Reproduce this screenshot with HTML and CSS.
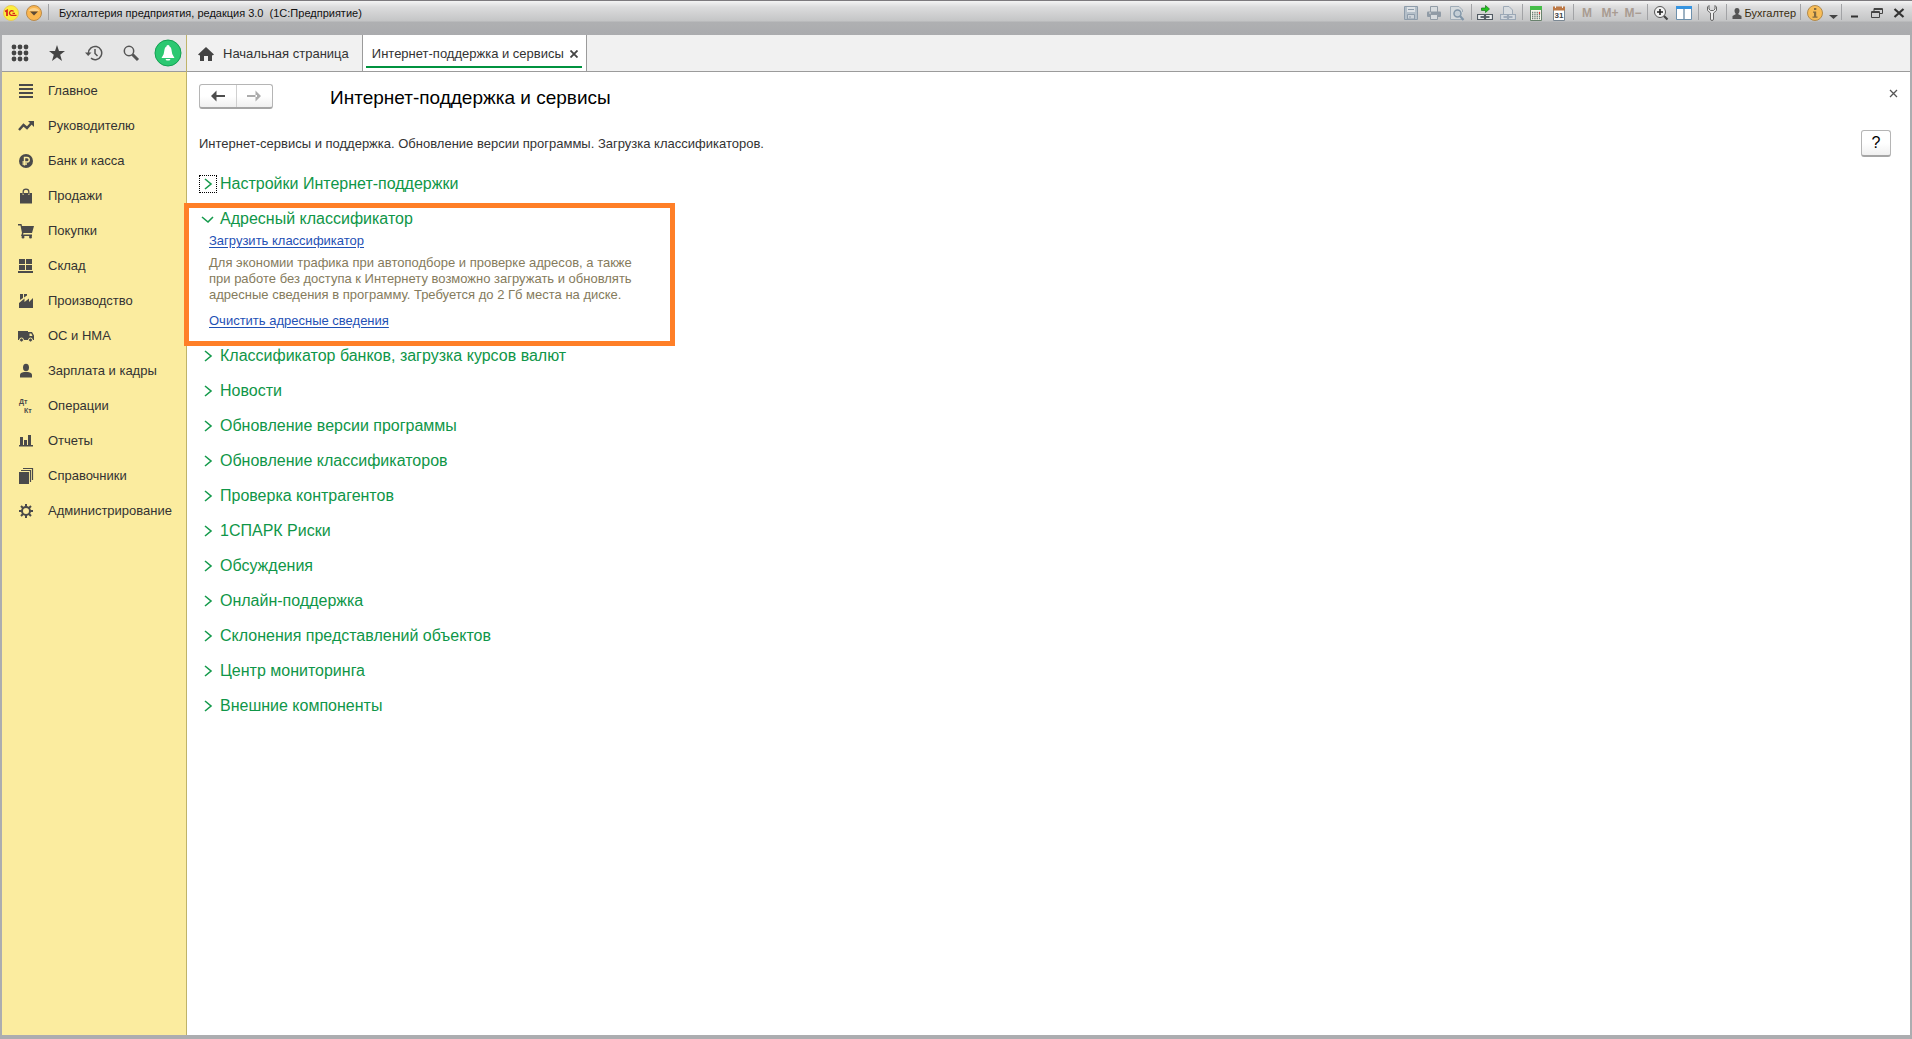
FILE: index.html
```html
<!DOCTYPE html>
<html lang="ru">
<head>
<meta charset="utf-8">
<title>Бухгалтерия предприятия, редакция 3.0</title>
<link rel="stylesheet" href="styles.css">
</head>
<body>
<div class="window">
  <header class="titlebar">
    <button class="tb-btn logo" aria-label="1С"><svg width="16" height="16" viewBox="0 0 16 16"><circle cx="8" cy="8" r="7.500" fill="#fdee3c" stroke="#e8c95a"/><path d="M2 6.500L4 5.500V11" fill="none" stroke="#d8261c" stroke-width="1.800"/><path d="M10.500 6.500A2.300 2.300 0 1 0 8.500 10.300H13.500M9.500 8.300H12" fill="none" stroke="#d8261c" stroke-width="1.300"/></svg></button>
    <button class="tb-btn main-menu" aria-label="Главное меню"><svg width="16" height="16" viewBox="0 0 16 16"><circle cx="8" cy="8" r="7.500" fill="#fbb64f" stroke="#b98a4c"/><path d="M2.500 6A6 5 0 0 1 13.500 6Z" fill="#fdd28b"/><path d="M4 6.500H12L8 10.500Z" fill="#5d4a36"/></svg></button>
    <span class="sep"></span>
    <span class="app-title">Бухгалтерия предприятия, редакция 3.0 &nbsp;(1С:Предприятие)</span>
    <button class="tb-btn" aria-label="Сохранить"><svg width="16" height="16" viewBox="0 0 16 16"><path d="M1.500 1.500H14.500V14.500H1.500Z" fill="#b4bfc9" stroke="#8e9caa"/><path d="M4 2H12V7H4Z" fill="#dde1e5"/><path d="M4.500 9.500H11.500V14H4.500Z" fill="#cdd3d9" stroke="#8e9caa"/><path d="M5 4.500H11M6 12H8" stroke="#8e9caa"/></svg></button>
    <button class="tb-btn" aria-label="Печать"><svg width="16" height="16" viewBox="0 0 16 16"><path d="M4.500 7V1.500H11.500V7" fill="#d8dcdf" stroke="#929ca6"/><rect x="1" y="6.500" width="14" height="5.500" rx="1" fill="#909ba6"/><path d="M4.500 9.500H11.500V14.500H4.500Z" fill="#d8dcdf" stroke="#929ca6"/><path d="M3 8H5" stroke="#ddd"/></svg></button>
    <button class="tb-btn" aria-label="Просмотр"><svg width="16" height="16" viewBox="0 0 16 16"><path d="M13 14.500H1.500V1.500H10L13.500 5V7" fill="#d5dadd" stroke="#a0acb7"/><circle cx="8.500" cy="8.500" r="3.500" fill="#c3ced6" stroke="#8296a8" stroke-width="1.500"/><path d="M11 11L14.500 15" stroke="#8296a8" stroke-width="2.200"/></svg></button>
    <span class="sep"></span>
    <button class="tb-btn" aria-label="Перейти по ссылке"><svg width="16" height="16" viewBox="0 0 16 16"><path d="M4.500 3H8.500V.500L12.500 4L8.500 7.500V5.500H4.500Z" fill="#22c51e" stroke="#17751a" stroke-width=".7"/><path d="M.500 9.500H7.500V14.500H.500ZM8.500 9.500H15.500V14.500H8.500Z" fill="#eceeef" stroke="#515a62" stroke-width="1.200"/><path d="M3.500 12H12.500" stroke="#515a62" stroke-width="1.800"/></svg></button>
    <button class="tb-btn" aria-label="Получить ссылку"><svg width="16" height="16" viewBox="0 0 16 16"><path d="M3.500 9V1.500H9L12.500 5V9" fill="#d8dce0" stroke="#9eaab7"/><path d="M.500 9.500H7.500V14.500H.500ZM8.500 9.500H15.500V14.500H8.500Z" fill="#d5dadf" stroke="#9ba8b6" stroke-width="1.200"/><path d="M3.500 12H12.500" stroke="#9ba8b6" stroke-width="1.800"/></svg></button>
    <span class="sep"></span>
    <button class="tb-btn" aria-label="Калькулятор"><svg width="16" height="16" viewBox="0 0 16 16"><path d="M2.500 1.500H13.500V15.500H2.500Z" fill="#f6f6ec" stroke="#69826d"/><path d="M2 1H14V5H2Z" fill="#45bd48"/><path d="M4 7.500H12M4 9.500H12M4 11.500H12M4 13.500H12" stroke="#708078" stroke-width="1.300" stroke-dasharray="1.300 1"/><path d="M11.500 7V9" stroke="#e63c35" stroke-width="1.200"/></svg></button>
    <button class="tb-btn" aria-label="Календарь"><svg width="16" height="16" viewBox="0 0 16 16"><path d="M2.500 2.500H13.500V15.500H2.500Z" fill="#fff" stroke="#7c8994"/><path d="M2 1.500H14V5.500H2Z" fill="#bd7845"/><path d="M4.500 0V3M11.500 0V3" stroke="#eee"/><text x="8" y="13" text-anchor="middle" class="cal-num">31</text></svg></button>
    <span class="sep"></span>
    <button class="tb-btn mem">M</button>
    <button class="tb-btn mem">M+</button>
    <button class="tb-btn mem">M−</button>
    <span class="sep"></span>
    <button class="tb-btn" aria-label="Увеличить"><svg width="16" height="16" viewBox="0 0 16 16"><circle cx="7" cy="7" r="5.500" fill="#f3f3f3" stroke="#555"/><path d="M4 7H10M7 4V10" stroke="#222" stroke-width="1.600"/><path d="M11 11L14.500 14.500" stroke="#444" stroke-width="2.200"/></svg></button>
    <button class="tb-btn" aria-label="Панели"><svg width="16" height="16" viewBox="0 0 16 16"><path d="M.500 1.500H15.500V14.500H.500Z" fill="#fff" stroke="#6d90ac"/><path d="M0 1H16V4H0Z" fill="#3694e0"/><path d="M8 4V14" stroke="#7d99ae" stroke-width="1.500"/></svg></button>
    <span class="sep"></span>
    <button class="tb-btn" aria-label="Настройка"><svg width="16" height="16" viewBox="0 0 16 16"><path d="M5 .500L3.500 2V5.500L6.500 8V14A1.500 1.500 0 0 0 9.500 14V8L12.500 5.500V2L11 .500V4L9.500 5.500H6.500L5 4Z" fill="#eee" stroke="#666"/></svg></button>
    <span class="sep"></span>
    <button class="user"><svg width="10" height="11" viewBox="0 0 10 11"><path d="M5 0C3.200 0 2.500 1.200 2.500 2.800S3.300 5.500 4 6L.500 8V11H9.500V8L6 6C6.700 5.500 7.500 4.400 7.500 2.800S6.800 0 5 0Z" fill="#555"/></svg>Бухгалтер</button>
    <span class="sep"></span>
    <button class="tb-btn info" aria-label="Информация"><svg width="16" height="16" viewBox="0 0 16 16"><circle cx="8" cy="8" r="7.500" fill="#f8bd57" stroke="#b18a4d"/><path d="M7 3H9.300V5H7ZM6 6.500H9.200V11.500H10.500V12.800H5.500V11.500H7V7.700H6Z" fill="#846b40"/></svg></button>
    <button class="tb-btn drop" aria-label="Ещё"><svg width="9" height="16" viewBox="0 0 9 16"><path d="M0 10H9L4.500 14Z" fill="#444"/></svg></button>
    <span class="sep"></span>
    <button class="tb-btn win" aria-label="Свернуть"><svg width="12" height="12" viewBox="0 0 12 12"><path d="M2 9.500H9" stroke="#333" stroke-width="2"/></svg></button>
    <button class="tb-btn win" aria-label="Восстановить"><svg width="12" height="12" viewBox="0 0 12 12"><path d="M3 4V1.500H11.500V6.500H9M.500 4.500H8.500V10.500H.500ZM.500 5.500H8.500M3 2.500H11" fill="none" stroke="#444"/></svg></button>
    <button class="tb-btn win" aria-label="Закрыть"><svg width="12" height="12" viewBox="0 0 12 12"><path d="M1.500 2L10.500 10M10.500 2L1.500 10" stroke="#333" stroke-width="2.200"/></svg></button>
  </header>

  <div class="frame">
    <nav class="sidebar">
      <div class="tools">
        <button aria-label="Меню функций"><svg width="18" height="18" viewBox="0 0 18 18" fill="#444"><circle cx="3" cy="3" r="2.400"/><circle cx="9" cy="3" r="2.400"/><circle cx="15" cy="3" r="2.400"/><circle cx="3" cy="9" r="2.400"/><circle cx="9" cy="9" r="2.400"/><circle cx="15" cy="9" r="2.400"/><circle cx="3" cy="15" r="2.400"/><circle cx="9" cy="15" r="2.400"/><circle cx="15" cy="15" r="2.400"/></svg></button>
        <button aria-label="Избранное"><svg width="18" height="18" viewBox="0 0 18 18"><path d="M9 1L11 7H17L12.200 10.700L14 17L9 13.200L4 17L5.800 10.700L1 7H7Z" fill="#444"/></svg></button>
        <button aria-label="История"><svg width="18" height="18" viewBox="0 0 18 18"><path d="M3.500 9A6.600 6.600 0 1 1 6 14.200M10 5V9.500L12.500 12" fill="none" stroke="#555" stroke-width="1.500"/><path d="M0 8.500H6.500L3.200 12Z" fill="#555"/></svg></button>
        <button aria-label="Поиск"><svg width="18" height="18" viewBox="0 0 18 18"><circle cx="7" cy="7" r="4.700" fill="none" stroke="#555" stroke-width="1.500"/><path d="M10.500 10.500L16 16" stroke="#555" stroke-width="3"/></svg></button>
        <button aria-label="Уведомления"><svg width="28" height="28" viewBox="0 0 28 28"><circle cx="14" cy="14" r="13" fill="#2bc871" stroke="#12a051"/><path d="M14 6C12.800 6 12.500 7 12.500 7.500C10 8.500 10.500 13 9.500 15.500L7.500 19H20.500L18.500 15.500C17.500 13 18 8.500 15.500 7.500C15.500 7 15.200 6 14 6ZM11.500 20H16.500L15.500 21.500H12.500Z" fill="#fff"/></svg></button>
      </div>
      <ul class="menu">
        <li><a href="#"><svg width="16" height="16" viewBox="0 0 16 16"><path d="M1 2H15M1 6H15M1 10H15M1 14H15" stroke="#4a4a4a" stroke-width="2"/></svg>Главное</a></li>
        <li><a href="#"><svg width="16" height="16" viewBox="0 0 16 16"><path d="M1 12L5.500 7L9 10L13.500 5" fill="none" stroke="#4a4a4a" stroke-width="2.400"/><path d="M10 3H16V9Z" fill="#4a4a4a"/></svg>Руководителю</a></li>
        <li><a href="#"><svg width="16" height="16" viewBox="0 0 16 16"><circle cx="8" cy="8" r="7" fill="#4a4a4a"/><path d="M6.500 12.500V4.500H9A2.200 2.200 0 0 1 9 9H4.500M4.500 11H9" fill="none" stroke="#fbec9f" stroke-width="1.400"/></svg>Банк и касса</a></li>
        <li><a href="#"><svg width="16" height="16" viewBox="0 0 16 16"><path d="M2 5H4.500V7H6V5H10V7H11.500V5H14V15.500H2Z" fill="#4a4a4a"/><path d="M5.200 6.500V3.500Q5.200 1.200 8 1.200T10.800 3.500V6.500" fill="none" stroke="#4a4a4a" stroke-width="1.300"/></svg>Продажи</a></li>
        <li><a href="#"><svg width="16" height="16" viewBox="0 0 16 16"><path d="M0 1H3.500L4 3H16L14 10H5.500L5 11.500H14V13H3L4 10L2.500 2.500H0Z" fill="#4a4a4a"/><circle cx="5" cy="14" r="1.500" fill="#4a4a4a"/><circle cx="12.500" cy="14" r="1.500" fill="#4a4a4a"/></svg>Покупки</a></li>
        <li><a href="#"><svg width="16" height="16" viewBox="0 0 16 16"><path d="M1 1H7V6H1ZM8 1H14V6H8ZM1 7H7V12H1ZM8 7H14V12H8ZM0 13H15V15H0Z" fill="#4a4a4a"/></svg>Склад</a></li>
        <li><a href="#"><svg width="16" height="16" viewBox="0 0 16 16"><path d="M1 15V10L6.500 5.500V9L11 5.500V9L15 5V15ZM2 1H5V5L2 7ZM6 1H9V2.500L6 4.500Z" fill="#4a4a4a"/></svg>Производство</a></li>
        <li><a href="#"><svg width="16" height="16" viewBox="0 0 16 16"><path d="M0 3H10V4H14L16 7.500V12H0ZM11.500 5.500V8H14.500L13.300 5.500Z" fill="#4a4a4a" fill-rule="evenodd"/><circle cx="3.500" cy="12" r="2" fill="#4a4a4a" stroke="#fbec9f"/><circle cx="12.500" cy="12" r="2" fill="#4a4a4a" stroke="#fbec9f"/></svg>ОС и НМА</a></li>
        <li><a href="#"><svg width="16" height="16" viewBox="0 0 16 16"><ellipse cx="8" cy="4.500" rx="3" ry="3.800" fill="#4a4a4a"/><path d="M2 14.500V12Q2 9.500 6 9H10Q14 9.500 14 12V14.500Z" fill="#4a4a4a"/></svg>Зарплата и кадры</a></li>
        <li><a href="#"><svg width="16" height="16" viewBox="0 0 16 16"><text class="mini" x="1" y="6">Дт</text><text class="mini" x="6" y="15">Кт</text></svg>Операции</a></li>
        <li><a href="#"><svg width="16" height="16" viewBox="0 0 16 16"><path d="M2 4H5V12H6V7H9V12H10V2H13V12H15V13.500H1V12H2Z" fill="#4a4a4a"/></svg>Отчеты</a></li>
        <li><a href="#"><svg width="16" height="16" viewBox="0 0 16 16"><path d="M1 4H11V16H1Z" fill="#4a4a4a"/><path d="M3 2.500H12.500V14M5 .500H14.500V12" fill="none" stroke="#4a4a4a" stroke-width="1.200"/></svg>Справочники</a></li>
        <li><a href="#"><svg width="16" height="16" viewBox="0 0 16 16"><circle cx="8" cy="8" r="4" fill="none" stroke="#4a4a4a" stroke-width="2"/><path d="M8 1V4M8 12V15M1 8H4M12 8H15M3 3L5 5M11 11L13 13M13 3L11 5M5 11L3 13" stroke="#4a4a4a" stroke-width="2"/></svg>Администрирование</a></li>
      </ul>
    </nav>

    <div class="work">
      <div class="tabs">
        <button class="tab home"><svg width="16" height="14" viewBox="0 0 16 14"><path d="M8 0L16 7.500L14.500 8.500L14 8V14H10V9H6V14H2V8L1.500 8.500L0 7.500Z" fill="#444"/></svg>Начальная страница</button>
        <button class="tab active"><span>Интернет-поддержка и сервисы</span><svg width="8" height="8" viewBox="0 0 8 8"><path d="M.500 .500L7.500 7.500M7.500 .500L.500 7.500" stroke="#444" stroke-width="1.800"/></svg></button>
      </div>
      <main class="page">
        <div class="page-head">
          <div class="history">
            <button aria-label="Назад"><svg width="14" height="12" viewBox="0 0 14 12"><path d="M0 6L5.500 .500V11.500ZM4 5H14V7H4Z" fill="#4d4d4d"/></svg></button>
            <button aria-label="Вперед"><svg width="14" height="12" viewBox="0 0 14 12"><path d="M14 6L8.500 .500V11.500ZM0 5H10V7H0Z" fill="#acacac"/></svg></button>
          </div>
          <h1>Интернет-поддержка и сервисы</h1>
          <button class="close" aria-label="Закрыть"><svg width="9" height="9" viewBox="0 0 9 9"><path d="M1 1L8 8M8 1L1 8" stroke="#555" stroke-width="1.300"/></svg></button>
        </div>
        <div class="intro">
          <p>Интернет-сервисы и поддержка. Обновление версии программы. Загрузка классификаторов.</p>
          <button class="help">?</button>
        </div>
        <div class="groups">
          <button class="group focused"><svg width="16" height="16" viewBox="0 0 16 16"><path d="M5 3L11 8L5 13"/></svg>Настройки Интернет-поддержки</button>
          <section class="open-group">
            <button class="group"><svg width="16" height="16" viewBox="0 0 16 16"><path d="M2 6L8 11L13 6"/></svg>Адресный классификатор</button>
            <div class="details">
              <a href="#">Загрузить классификатор</a>
              <p>Для экономии трафика при автоподборе и проверке адресов, а также<br>при работе без доступа к Интернету возможно загружать и обновлять<br>адресные сведения в программу. Требуется до 2 Гб места на диске.</p>
              <a href="#">Очистить адресные сведения</a>
            </div>
          </section>
          <button class="group"><svg width="16" height="16" viewBox="0 0 16 16"><path d="M5 3L11 8L5 13"/></svg>Классификатор банков, загрузка курсов валют</button>
          <button class="group"><svg width="16" height="16" viewBox="0 0 16 16"><path d="M5 3L11 8L5 13"/></svg>Новости</button>
          <button class="group"><svg width="16" height="16" viewBox="0 0 16 16"><path d="M5 3L11 8L5 13"/></svg>Обновление версии программы</button>
          <button class="group"><svg width="16" height="16" viewBox="0 0 16 16"><path d="M5 3L11 8L5 13"/></svg>Обновление классификаторов</button>
          <button class="group"><svg width="16" height="16" viewBox="0 0 16 16"><path d="M5 3L11 8L5 13"/></svg>Проверка контрагентов</button>
          <button class="group"><svg width="16" height="16" viewBox="0 0 16 16"><path d="M5 3L11 8L5 13"/></svg>1СПАРК Риски</button>
          <button class="group"><svg width="16" height="16" viewBox="0 0 16 16"><path d="M5 3L11 8L5 13"/></svg>Обсуждения</button>
          <button class="group"><svg width="16" height="16" viewBox="0 0 16 16"><path d="M5 3L11 8L5 13"/></svg>Онлайн-поддержка</button>
          <button class="group"><svg width="16" height="16" viewBox="0 0 16 16"><path d="M5 3L11 8L5 13"/></svg>Склонения представлений объектов</button>
          <button class="group"><svg width="16" height="16" viewBox="0 0 16 16"><path d="M5 3L11 8L5 13"/></svg>Центр мониторинга</button>
          <button class="group"><svg width="16" height="16" viewBox="0 0 16 16"><path d="M5 3L11 8L5 13"/></svg>Внешние компоненты</button>
        </div>
      </main>
    </div>
  </div>
</div>
</body>
</html>
```
FILE: styles.css
```css
*, *::after { box-sizing: border-box; }

body {
  margin: 0;
  font: 13px/16px "Liberation Sans", Arial, sans-serif;
  color: #333;
}

button {
  margin: 0;
  padding: 0;
  border: 0;
  background: none;
  font: inherit;
  color: inherit;
}

svg { display: block; flex: none; }
p, h1, ul { margin: 0; padding: 0; }

.window {
  display: flex;
  flex-direction: column;
  min-height: 100vh;
  padding: 0 2px 4px;
  background: #acadb0;
}

/* Title bar */
.titlebar {
  display: flex;
  align-items: flex-start;
  height: 35px;
  margin: 0 -2px;
  padding: 1px 2px 0 0;
  border-top: 1px solid #7d7a7e;
  background: linear-gradient(#f4f4f4, #dcdcdd 6px, #c4c5c6 20px, #afb0b2 21px, #aaabae 34px);
  font-size: 11px;
}

.tb-btn {
  display: flex;
  align-items: center;
  justify-content: center;
  width: 23px;
  height: 22px;
}

.logo { width: 22px; }
.main-menu { width: 24px; }
.info { width: 24px; }
.drop { width: 12px; }
.win { width: 22px; }

.sep {
  width: 1px;
  height: 16px;
  margin: 2px;
  background: #a2a3a6;
}

.app-title {
  flex: 1;
  padding-left: 8px;
  line-height: 22px;
  color: #111;
}

.mem { font-size: 12px; font-weight: bold; color: #a99c92; }
.cal-num { font: bold 8px "Liberation Sans", sans-serif; fill: #444; }

.user {
  display: flex;
  align-items: center;
  gap: 3px;
  height: 22px;
  padding: 0 2px 0 3px;
  color: #3a2d10;
}

/* Window body */
.frame { display: flex; flex: 1; }

.sidebar {
  display: flex;
  flex-direction: column;
  width: 185px;
  border-right: 1px solid #bfb369;
  background: #fbec9f;
}

.tools {
  display: flex;
  align-items: center;
  height: 37px;
  border-bottom: 1px solid #9b9b9b;
  background: #e6e6e6;
}

.tools button {
  display: flex;
  flex: 1;
  justify-content: center;
}

.menu { padding-top: 1px; list-style: none; }

.menu a {
  display: flex;
  align-items: center;
  gap: 14px;
  height: 35px;
  padding-left: 16px;
  color: #333;
  text-decoration: none;
}

.mini { font: bold 7px "Liberation Sans", sans-serif; fill: #4a4a4a; }

.work {
  display: flex;
  flex: 1;
  flex-direction: column;
  min-width: 0;
  background: #fff;
}

.tabs {
  display: flex;
  height: 37px;
  border-bottom: 1px solid #9b9b9b;
  background: #f1f1f1;
}

.tab {
  display: flex;
  align-items: center;
  padding-top: 2px;
  border-right: 1px solid #9b9b9b;
}

.home { gap: 9px; padding-right: 13px; padding-left: 11px; }

.active {
  gap: 6px;
  padding-right: 8px;
  padding-left: 9px;
  background: linear-gradient(#00923f, #00923f) center bottom 3px / calc(100% - 7px) 2px no-repeat #fff;
}

/* Page */
.page { padding: 12px 19px 24px 12px; }

.page-head { display: flex; height: 36px; }

.history {
  display: flex;
  width: 74px;
  height: 25px;
  border: 1px solid #b5b5b5;
  border-bottom: 2px solid #a5a5a5;
  border-radius: 3px;
  background: linear-gradient(#fff 50%, #f0f0f0);
}

.history button {
  display: flex;
  flex: 1;
  align-items: center;
  justify-content: center;
}

.history button + button { border-left: 1px solid #d0d0d0; }

h1 {
  flex: 1;
  padding-left: 57px;
  font-size: 19px;
  font-weight: normal;
  line-height: 28px;
  color: #000;
}

.close { height: 18px; margin-right: -9px; padding: 0 2px; }

.intro {
  display: flex;
  align-items: flex-start;
  justify-content: space-between;
  height: 46px;
  padding-top: 10px;
}

.intro p { line-height: 28px; }

.help {
  width: 30px;
  height: 27px;
  border: 1px solid #b5b5b5;
  border-bottom: 2px solid #a5a5a5;
  border-radius: 3px;
  background: linear-gradient(#fff 50%, #f0f0f0);
  font-size: 16px;
  color: #000;
}

.groups {
  display: flex;
  flex-direction: column;
  align-items: flex-start;
}

.group {
  display: flex;
  align-items: center;
  gap: 4px;
  height: 35px;
  padding-left: 1px;
  font-size: 16px;
  color: #0f9648;
}

.group path { fill: none; stroke: #159a4c; stroke-width: 1.6; }
.focused svg { outline: 1px dotted #000; }

.open-group { position: relative; height: 137px; }

/* Highlight frame drawn over the page and the edge of the sidebar */
.open-group::after {
  content: "";
  position: absolute;
  top: 2px;
  left: -15px;
  width: 491px;
  height: 143px;
  border: 5px solid #ff7f27;
  pointer-events: none;
}

.details { margin-top: -3px; padding-left: 10px; }
.details p { margin: 6px 0 10px; color: #857b5c; }
.details a { color: #1f51b5; text-underline-offset: 2px; }
```
